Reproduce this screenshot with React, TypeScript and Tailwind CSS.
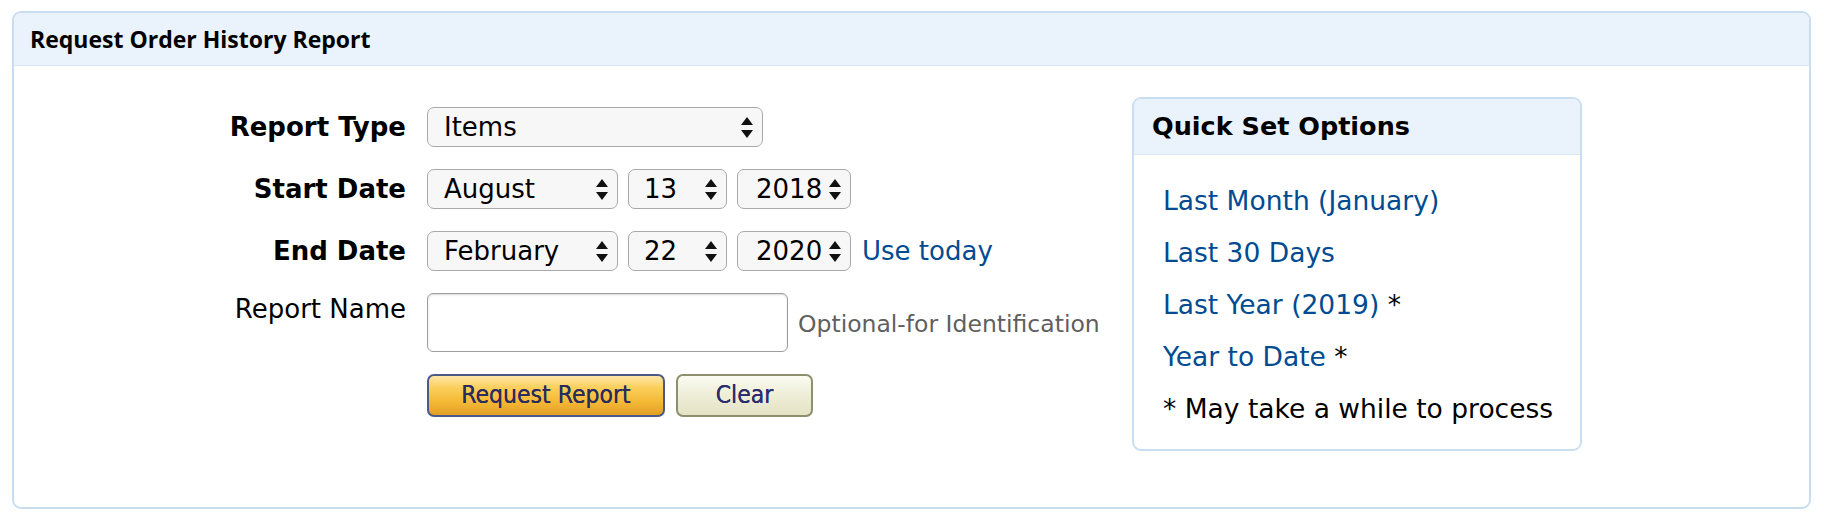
const verdana = { fontFamily: '"DejaVu Sans", Verdana, sans-serif' }

function Arrows(): React.JSX.Element {
  return (
    <svg width="12" height="21" viewBox="0 0 12 21" className="shrink-0">
      <polygon points="0,8 6,0 12,8" fill="#111" />
      <polygon points="0,13 6,21 12,13" fill="#111" />
    </svg>
  )
}

function FakeSelect({ value, width, pl }: { value: string; width: string; pl: string }): React.JSX.Element {
  return (
    <div
      className={`flex h-[40px] items-center justify-between rounded-[7px] border border-[#a9a9a9] bg-[#f7f7f7] pr-[9px] text-[26px] leading-none text-black ${width} ${pl}`}
    >
      <span>{value}</span>
      <Arrows />
    </div>
  )
}

function Label({ children, bold = true }: { children: React.ReactNode; bold?: boolean }): React.JSX.Element {
  return (
    <div className={`w-[180px] shrink-0 text-right text-[26px] leading-[32px] text-black ${bold ? 'font-bold' : ''}`}>
      {children}
    </div>
  )
}

const quickLinks = [
  { text: 'Last Month (January)', star: false },
  { text: 'Last 30 Days', star: false },
  { text: 'Last Year (2019)', star: true },
  { text: 'Year to Date', star: true }
]

export default function App(): React.JSX.Element {
  return (
    <div className="h-[524px] w-[1824px] bg-white pl-[12px] pr-[13px] pt-[11px]" style={verdana}>
      <div className="flex h-[498px] flex-col overflow-hidden rounded-[9px] border-2 border-[#c9ddf1]">
        <header
          className="flex h-[53px] shrink-0 items-center border-b border-[#d9e7f6] bg-[#eaf2fc] pl-[16px] text-[23px] font-bold text-black"
          style={{ fontFamily: '"Open Sans", "Noto Sans", sans-serif' }}
        >
          Request Order History Report
        </header>

        <div className="flex items-start pt-[31px]">
          <div className="ml-[212px] mt-[10px] flex w-[906px] shrink-0 flex-col gap-[22px]">
            <div className="flex items-center gap-[21px]">
              <Label>Report Type</Label>
              <FakeSelect value="Items" width="w-[336px]" pl="pl-[16px]" />
            </div>

            <div className="flex items-center gap-[21px]">
              <Label>Start Date</Label>
              <div className="flex gap-[10px]">
                <FakeSelect value="August" width="w-[191px]" pl="pl-[16px]" />
                <FakeSelect value="13" width="w-[99px]" pl="pl-[15px]" />
                <FakeSelect value="2018" width="w-[114px]" pl="pl-[18px]" />
              </div>
            </div>

            <div className="flex items-center gap-[21px]">
              <Label>End Date</Label>
              <div className="flex items-center gap-[10px]">
                <FakeSelect value="February" width="w-[191px]" pl="pl-[16px]" />
                <FakeSelect value="22" width="w-[99px]" pl="pl-[15px]" />
                <FakeSelect value="2020" width="w-[114px]" pl="pl-[18px]" />
                <a className="ml-[1px] text-[26px] leading-none text-[#004b91]">Use today</a>
              </div>
            </div>

            <div className="flex items-start gap-[21px]">
              <Label bold={false}>Report Name</Label>
              <div className="flex items-center gap-[10px]">
                <div className="h-[59px] w-[361px] rounded-[6px] border border-[#9e9e9e] bg-white shadow-[inset_0_1px_2px_rgba(0,0,0,0.15)]" />
                <span className="pt-[4px] text-[23.5px] text-[#5f5f5f]">Optional-for Identification</span>
              </div>
            </div>

            <div className="flex gap-[11px] pl-[201px]">
              <button
                className="flex h-[43px] w-[238px] items-center justify-center rounded-[7px] border-2 border-[#4c5a86] bg-[linear-gradient(to_bottom,#fde6a6_0%,#fbcf5c_30%,#f5b936_65%,#e39f26_100%)] text-[24.5px] text-[#2b2c5e] [text-shadow:0_0_0.6px_#2b2c5e]"
                style={{ fontFamily: '"DejaVu Sans Condensed", "DejaVu Sans", sans-serif' }}
              >
                Request Report
              </button>
              <button
                className="flex h-[43px] w-[137px] items-center justify-center rounded-[7px] border-2 border-[#8e8f6c] bg-[linear-gradient(to_bottom,#fbfbf2_0%,#f0f0dc_40%,#e4e3c4_100%)] text-[24.5px] text-[#2b2c6e] [text-shadow:0_0_0.6px_#2b2c6e]"
                style={{ fontFamily: '"DejaVu Sans Condensed", "DejaVu Sans", sans-serif' }}
              >
                Clear
              </button>
            </div>
          </div>

          <div className="flex h-[354px] w-[450px] shrink-0 flex-col overflow-hidden rounded-[9px] border-2 border-[#cadef2]">
            <div className="flex h-[56px] shrink-0 items-center border-b border-[#d9e7f6] bg-[#eaf2fc] pl-[18px] text-[25.5px] font-bold text-black">
              Quick Set Options
            </div>
            <ul className="pl-[29px] pt-[20px] text-[26.5px] leading-[52px]">
              {quickLinks.map((l) => (
                <li key={l.text}>
                  <a className="text-[#004b91]">{l.text}</a>
                  {l.star && <span className="text-black"> *</span>}
                </li>
              ))}
              <li className="text-black">* May take a while to process</li>
            </ul>
          </div>
        </div>
      </div>
    </div>
  )
}
